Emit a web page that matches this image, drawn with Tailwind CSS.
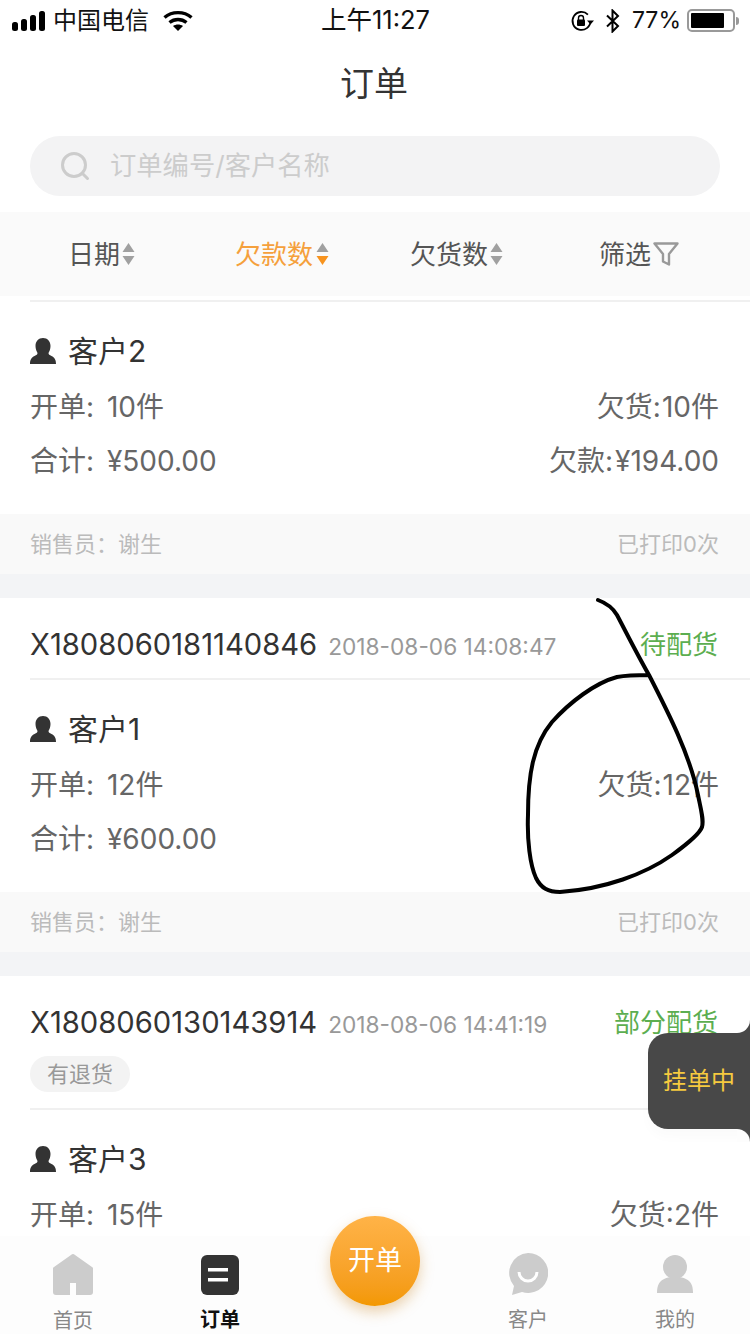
<!DOCTYPE html>
<html lang="zh-CN">
<head>
    <meta charset="UTF-8">
    <title>订单</title>
    <script src="https://cdn.jsdelivr.net/npm/@tailwindcss/browser@4"></script>
</head>
<body class="bg-white font-['Inter','Noto_Sans_CJK_SC',sans-serif]">
<div class="relative w-[750px] h-[1334px] overflow-hidden bg-white">

    <!-- Status bar -->
    <div class="flex items-center justify-between h-10 pt-[1px] pl-3 pr-[11px] text-[24px] text-[#111]">
        <div class="flex items-center w-[300px]">
            <svg width="34" height="20" viewBox="0 0 34 20" fill="#000">
                <rect x="0" y="11" width="6" height="9" rx="2.5"/>
                <rect x="9" y="8" width="6" height="12" rx="2.5"/>
                <rect x="18" y="4" width="6" height="16" rx="2.5"/>
                <rect x="27" y="0" width="6" height="20" rx="2.5"/>
            </svg>
            <span class="ml-[7px]">中国电信</span>
            <svg class="ml-[14px]" width="30" height="22" viewBox="0 0 30 22" fill="none" stroke="#000" stroke-width="3.4">
                <path d="M1.5 7.5C9 1 21 1 28.500 7.500"/>
                <path d="M6.500 12.500C11.500 8.500 18.500 8.500 23.500 12.500"/>
                <path d="M15 21l-5-5c3-2 7-2 10 0z" fill="#000" stroke="none"/>
            </svg>
        </div>
        <span class="text-[25.5px]">上午11:27</span>
        <div class="flex items-center justify-end w-[300px]">
            <svg width="24" height="22" viewBox="0 0 24 22" fill="none" stroke="#000" stroke-width="1.800">
                <path d="M20.500 11a9 9 0 1 1-2.600-6.400"/>
                <path d="M24 10.500h-7l3.500 4z" fill="#000" stroke="none"/>
                <rect x="7" y="9.500" width="8" height="6.500" rx="1" fill="#000" stroke="none"/>
                <path d="M8.500 10V8a2.500 2.500 0 0 1 5 0v2" stroke-width="1.400"/>
            </svg>
            <svg class="ml-[11px]" width="16" height="24" viewBox="0 0 16 24" fill="none" stroke="#000" stroke-width="2">
                <path d="M2 6.500l11 10.500-5.500 5.500V1.500L13 7 2 17.500"/>
            </svg>
            <span class="ml-[11px] text-[23px]">77%</span>
            <div class="ml-[6px] flex items-center">
                <div class="w-[48px] h-[23px] rounded-[5px] border-2 border-[#999] p-[2px]">
                    <div class="w-[33px] h-full bg-black rounded-[1px]"></div>
                </div>
                <div class="ml-[1px] w-[3px] h-[8px] bg-[#999] rounded-r-sm"></div>
            </div>
        </div>
    </div>

    <!-- Title -->
    <div class="h-[88px] pb-[2px] pr-[2px] flex items-center justify-center text-[34px] text-[#333]">订单</div>

    <!-- Search -->
    <div class="mt-[8px] mx-[30px] h-[60px] rounded-[30px] bg-[#f3f3f4] flex items-center pl-[30px]">
        <svg width="30" height="30" viewBox="0 0 30 30" fill="none" stroke="#ccc" stroke-width="3">
            <circle cx="14" cy="14" r="11.500"/>
            <path d="M22.500 22.500l5 5" stroke-linecap="round"/>
        </svg>
        <span class="ml-[20px] text-[26.3px] text-[#ccc]">订单编号/客户名称</span>
    </div>

    <!-- Sort bar -->
    <div class="mt-[16px] h-[84px] bg-[#fafafa] flex items-center pl-[68px] text-[26px] text-[#555]">
        <div class="flex items-center">日期
            <svg class="ml-[2px]" width="13" height="22" viewBox="0 0 13 22"><path d="M6.500 0l6 9H.500z" fill="#a0a0a0"/><path d="M6.500 22l6-9H.500z" fill="#a0a0a0"/></svg>
        </div>
        <div class="flex items-center ml-[100px] text-[#f5a03c]">欠款数
            <svg class="ml-[3px]" width="13" height="22" viewBox="0 0 13 22"><path d="M6.500 0l6 9H.500z" fill="#a0a0a0"/><path d="M6.500 22l6-9H.500z" fill="#f7931e"/></svg>
        </div>
        <div class="flex items-center ml-[81px]">欠货数
            <svg class="ml-[2px]" width="13" height="22" viewBox="0 0 13 22"><path d="M6.500 0l6 9H.500z" fill="#a0a0a0"/><path d="M6.500 22l6-9H.500z" fill="#a0a0a0"/></svg>
        </div>
        <div class="flex items-center ml-[96px]">筛选
            <svg class="ml-[2px]" width="26" height="26" viewBox="0 0 26 26" fill="none" stroke="#999" stroke-width="2.400" stroke-linejoin="round">
                <path d="M1.500 2.500h23L16 13v10.500l-6-3V13z"/>
            </svg>
        </div>
    </div>

    <!-- Card: 客户2 -->
    <div class="mt-[4px] ml-[30px] h-[2px] bg-[#f0f0f0]"></div>
    <div class="h-[212px] px-[30px] pt-[29px] pr-[31px]">
        <div class="flex items-center h-[40px] text-[30px] text-[#333]">
            <svg width="26" height="26" viewBox="0 0 26 26" fill="#333"><path d="M13 0c4.500 0 7.500 3.500 7.500 8 0 3-1 5-2 7 0 1.500 1 2 3 3 3 1.500 4.500 3.500 4.500 8H0c0-4.500 1.500-6.500 4.500-8 2-1 3-1.500 3-3-1-2-2-4-2-7C5.500 3.500 8.500 0 13 0z"/></svg>
            <span class="ml-[12px]">客户2</span>
        </div>
        <div class="mt-[16px] h-[40px] flex items-center justify-between text-[28px] text-[#666]"><span>开单: <span class="ml-[5px]">10件</span></span><span>欠货:<span class="ml-[1px]">10件</span></span></div>
        <div class="mt-[14px] h-[40px] flex items-center justify-between text-[28px] text-[#666]"><span>合计: <span class="ml-[5px]">¥500.00</span></span><span>欠款:<span class="ml-[2px]">¥194.00</span></span></div>
    </div>
    <div class="h-[60px] pl-[30px] pr-[31px] bg-[#f9f9f9] flex items-center justify-between text-[22px] text-[#bbb]"><span>销售员：谢生</span><span>已打印0次</span></div>
    <div class="h-[24px] bg-[#f3f4f6]"></div>

    <!-- Card: 客户1 -->
    <div class="h-[80px] pl-[30px] pr-[32px] pt-[27px] flex items-start justify-between">
        <div class="flex items-baseline h-[40px] -mt-[2px]"><span class="text-[29.2px] text-[#333]">X1808060181140846</span><span class="ml-[11px] text-[22.7px] text-[#999]">2018-08-06 14:08:47</span></div>
        <span class="text-[26px] text-[#5cae50] leading-[40px]">待配货</span>
    </div>
    <div class="ml-[30px] h-[2px] bg-[#f0f0f0]"></div>
    <div class="h-[212px] px-[30px] pt-[29px] pr-[31px]">
        <div class="flex items-center h-[40px] text-[30px] text-[#333]">
            <svg width="26" height="26" viewBox="0 0 26 26" fill="#333"><path d="M13 0c4.500 0 7.500 3.500 7.500 8 0 3-1 5-2 7 0 1.500 1 2 3 3 3 1.500 4.500 3.500 4.500 8H0c0-4.500 1.500-6.500 4.500-8 2-1 3-1.500 3-3-1-2-2-4-2-7C5.500 3.500 8.500 0 13 0z"/></svg>
            <span class="ml-[12px]">客户1</span>
        </div>
        <div class="mt-[16px] h-[40px] flex items-center justify-between text-[28px] text-[#666]"><span>开单: <span class="ml-[5px]">12件</span></span><span>欠货:<span class="ml-[1px]">12件</span></span></div>
        <div class="mt-[14px] h-[40px] flex items-center text-[28px] text-[#666]"><span>合计: <span class="ml-[5px]">¥600.00</span></span></div>
    </div>
    <div class="h-[60px] pl-[30px] pr-[31px] bg-[#f9f9f9] flex items-center justify-between text-[22px] text-[#bbb]"><span>销售员：谢生</span><span>已打印0次</span></div>
    <div class="h-[24px] bg-[#f3f4f6]"></div>

    <!-- Card: 客户3 -->
    <div class="h-[132px] pl-[30px] pr-[32px] pt-[27px]">
        <div class="flex items-start justify-between h-[40px]">
            <div class="flex items-baseline -mt-[2px]"><span class="text-[29.2px] text-[#333]">X1808060130143914</span><span class="ml-[11px] text-[22.7px] text-[#999]">2018-08-06 14:41:19</span></div>
            <span class="text-[26px] text-[#5cae50] leading-[40px]">部分配货</span>
        </div>
        <div class="mt-[13px] w-[100px] h-[36px] rounded-[18px] bg-[#f3f3f3] flex items-center justify-center text-[22px] text-[#999]">有退货</div>
    </div>
    <div class="ml-[30px] h-[2px] bg-[#f0f0f0]"></div>
    <div class="px-[30px] pt-[29px] pr-[31px]">
        <div class="flex items-center h-[40px] text-[30px] text-[#333]">
            <svg width="26" height="26" viewBox="0 0 26 26" fill="#333"><path d="M13 0c4.500 0 7.500 3.500 7.500 8 0 3-1 5-2 7 0 1.500 1 2 3 3 3 1.500 4.500 3.500 4.500 8H0c0-4.500 1.500-6.500 4.500-8 2-1 3-1.500 3-3-1-2-2-4-2-7C5.500 3.500 8.500 0 13 0z"/></svg>
            <span class="ml-[12px]">客户3</span>
        </div>
        <div class="mt-[16px] h-[40px] flex items-center justify-between text-[28px] text-[#666]"><span>开单: <span class="ml-[5px]">15件</span></span><span>欠货:2件</span></div>
    </div>

    <!-- Hand-drawn annotation -->
    <svg class="absolute left-0 top-0 pointer-events-none" width="750" height="1334" fill="none" stroke="#000" stroke-width="4" stroke-linecap="round" stroke-linejoin="round">
        <path d="M598 600C606 603 613 608 617 615C626 632 637 654 649 675C668 712 690 755 698 795C701 810 704 820 702 827C700 833 690 842 672 855C645 874 605 889 560 892C548 892 541 888 536 878C530 865 527 840 528 815C528 775 533 745 552 722C570 702 595 683 617 677C628 675 638 675 649 675"/>
    </svg>

    <!-- Floating pending tab -->
    <div class="absolute right-0 top-[1033px] w-[102px] h-[96px] bg-[#484848] rounded-l-[20px] shadow-[0_8px_12px_rgba(0,0,0,0.02)] flex items-center justify-center text-[24px] text-[#f6ca3f]">
        挂单中
        <div class="absolute right-0 -top-[13px] w-[13px] h-[13px] bg-[#484848]"><div class="w-full h-full bg-white rounded-br-[13px]"></div></div>
        <div class="absolute right-0 -bottom-[13px] w-[13px] h-[13px] bg-[#484848]"><div class="w-full h-full bg-[#fdfdfd] rounded-tr-[13px]"></div></div>
    </div>

    <!-- Bottom tab bar -->
    <div class="absolute left-0 right-0 bottom-0 h-[98px] bg-[#fdfdfd] grid grid-cols-5 text-[20px] text-[#888]">
        <div class="flex flex-col items-center pt-[18px] -ml-[4px]">
            <svg width="40" height="41" viewBox="0 0 40 41" fill="#ccc"><path d="M18 1L1 13a2 2 0 0 0-1 2v23a3 3 0 0 0 3 3h14V29h6v12h14a3 3 0 0 0 3-3V15a2 2 0 0 0-1-2L22 1a3 3 0 0 0-4 0z"/></svg>
            <span class="mt-[11px]">首页</span>
        </div>
        <div class="flex flex-col items-center pt-[19px] text-[#111] font-bold -ml-[10px]">
            <svg width="38" height="40" viewBox="0 0 38 40"><rect width="38" height="40" rx="6" fill="#333"/><rect x="7" y="13" width="20" height="3.500" fill="#fff"/><rect x="7" y="23" width="20" height="3.500" fill="#fff"/></svg>
            <span class="mt-[10px]">订单</span>
        </div>
        <div></div>
        <div class="flex flex-col items-center pt-[17px] ml-[6px]">
            <svg width="40" height="42" viewBox="0 0 40 42"><path d="M20 0a20 20 0 1 1-6 39l-10 3 2-9A20 20 0 0 1 20 0z" fill="#ccc"/><path d="M11 19a9 9 0 0 0 18 0" fill="none" stroke="#fff" stroke-width="3"/></svg>
            <span class="mt-[10px]">客户</span>
        </div>
        <div class="flex flex-col items-center pt-[19px]">
            <svg width="36" height="38" viewBox="0 0 36 38" fill="#ccc"><circle cx="18" cy="12" r="12"/><path d="M0 38c0-10 4-16 18-16s18 6 18 16z"/></svg>
            <span class="mt-[12px]">我的</span>
        </div>
    </div>

    <!-- Create order button -->
    <div class="absolute left-[330px] top-[1216px] w-[90px] h-[90px] rounded-full bg-gradient-to-b from-[#ffb347] to-[#f39800] shadow-[0_6px_14px_rgba(200,130,30,0.35)] flex items-center justify-center text-[27px] text-white">开单</div>
</div>
</body>
</html>
